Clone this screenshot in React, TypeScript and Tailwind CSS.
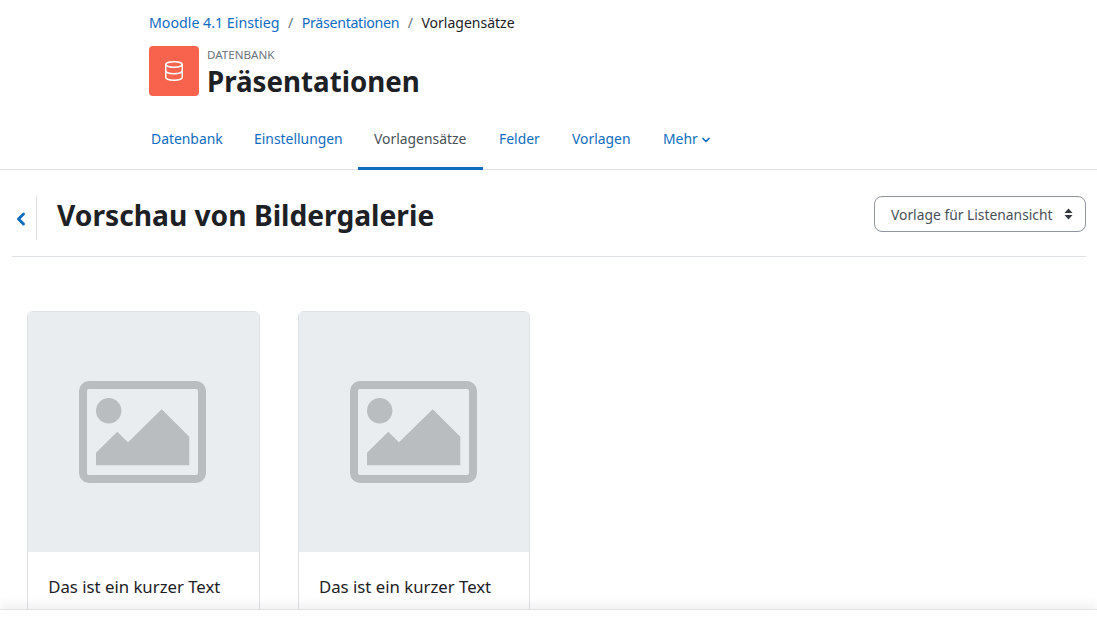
import { ChevronLeft, ChevronDown, Database } from "lucide-react";

const font = { fontFamily: '"Noto Sans", sans-serif' };

function Placeholder() {
  return (
    <svg width="128" height="102" viewBox="0 0 128 102" fill="none">
      <rect x="4" y="4" width="119" height="94" rx="6" stroke="#babdc0" strokeWidth="8" />
      <circle cx="29.7" cy="29.7" r="12.7" fill="#babdc0" />
      <polygon points="17,84.3 17,71.7 38.3,50.7 49,61.3 82.7,28.3 110.3,55.7 110.3,84.3" fill="#babdc0" />
    </svg>
  );
}

function Card() {
  return (
    <div className="w-[232.4px] h-[320px] shrink-0 border border-[#dee2e6] rounded-md overflow-hidden bg-white">
      <div className="h-[240px] bg-[#e9edf0] flex items-center justify-center">
        <Placeholder />
      </div>
      <div className="px-5 pt-[23px] text-[16.75px] leading-[24px] text-[#1d2125]">Das ist ein kurzer Text</div>
    </div>
  );
}

export default function App() {
  return (
    <div className="relative h-[623px] w-[1097px] overflow-hidden bg-white text-[#1d2125]" style={font}>
      <div className="pl-[149px] pt-[12px]">
        <div className="flex items-center h-[22px] text-[14.2px] leading-[22px]">
          <span className="text-[#0f6cbf]">Moodle 4.1 Einstieg</span>
          <span className="mx-[8.5px] text-[#6a737b]">/</span>
          <span className="text-[#0f6cbf] tracking-[-0.3px]">Präsentationen</span>
          <span className="mx-[8.5px] text-[#6a737b]">/</span>
          <span className="text-[14px]">Vorlagensätze</span>
        </div>
        <div className="flex items-center mt-[12px] h-[50px]">
          <div className="w-[50px] h-[50px] rounded bg-[#f7634d] flex items-center justify-center">
            <Database size={22} strokeWidth={1.6} color="#ffffff" />
          </div>
          <div className="ml-2 mt-[3px]">
            <div className="text-[11.6px] leading-[16px] text-[#6a737b]">DATENBANK</div>
            <div className="text-[27.7px] leading-[36px] font-bold">Präsentationen</div>
          </div>
        </div>
      </div>
      <div className="h-[74px] border-b border-[#dee2e6] pl-[135px] flex items-end text-[13.9px] text-[#0f6cbf]">
        <div className="w-[103px] pl-4 h-[50px] leading-[38px] mb-[-1px]">Datenbank</div>
        <div className="w-[120px] pl-4 h-[50px] leading-[38px] mb-[-1px]">Einstellungen</div>
        <div className="w-[125px] pl-4 h-[50px] leading-[38px] mb-[-1px] border-b-[3px] border-[#0f6cbf] text-[#495057]">Vorlagensätze</div>
        <div className="w-[73px] pl-4 h-[50px] leading-[38px] mb-[-1px]">Felder</div>
        <div className="w-[91px] pl-4 h-[50px] leading-[38px] mb-[-1px]">Vorlagen</div>
        <div className="pl-4 h-[50px] mb-[-1px] flex items-start pt-[10px] leading-[18px] gap-[2px]">
          <span>Mehr</span>
          <ChevronDown size={12} strokeWidth={3.5} className="mt-[4px]" />
        </div>
      </div>
      <div className="ml-3 mr-[11px] h-[87px] border-b border-[#dee2e6] flex items-start justify-between">
        <div className="flex items-center h-[44px] mt-[26px]">
          <div className="w-[25px] h-[44px] border-r border-[#dee2e6] flex items-center">
            <ChevronLeft size={20} strokeWidth={3.5} color="#0f6cbf" className="-ml-px mt-[1px]" />
          </div>
          <div className="ml-5 mb-[6px] text-[28.2px] leading-[38px] font-bold">Vorschau von Bildergalerie</div>
        </div>
        <div className="mt-[26px] w-[212px] h-[36px] border border-[#8f959e] rounded-lg flex items-center justify-between pl-4 pr-[12px] text-[13.85px] text-[#495057]">
          <span className="pt-[2px]">Vorlage für Listenansicht</span>
          <svg width="9" height="12" viewBox="0 0 9 12" fill="#343a40"><path d="M4.5 0.5 8.5 5H0.5z" /><path d="M4.5 11.5 0.5 7H8.5z" /></svg>
        </div>
      </div>
      <div className="flex gap-[38.4px] pl-[27.2px] pt-[54px]">
        <Card />
        <Card />
      </div>
      <div className="absolute left-0 right-0 bottom-0 h-[14px] bg-white border-t border-[#e3e3e3] shadow-[0_-6px_10px_rgba(0,0,0,0.05)]" />
    </div>
  );
}
